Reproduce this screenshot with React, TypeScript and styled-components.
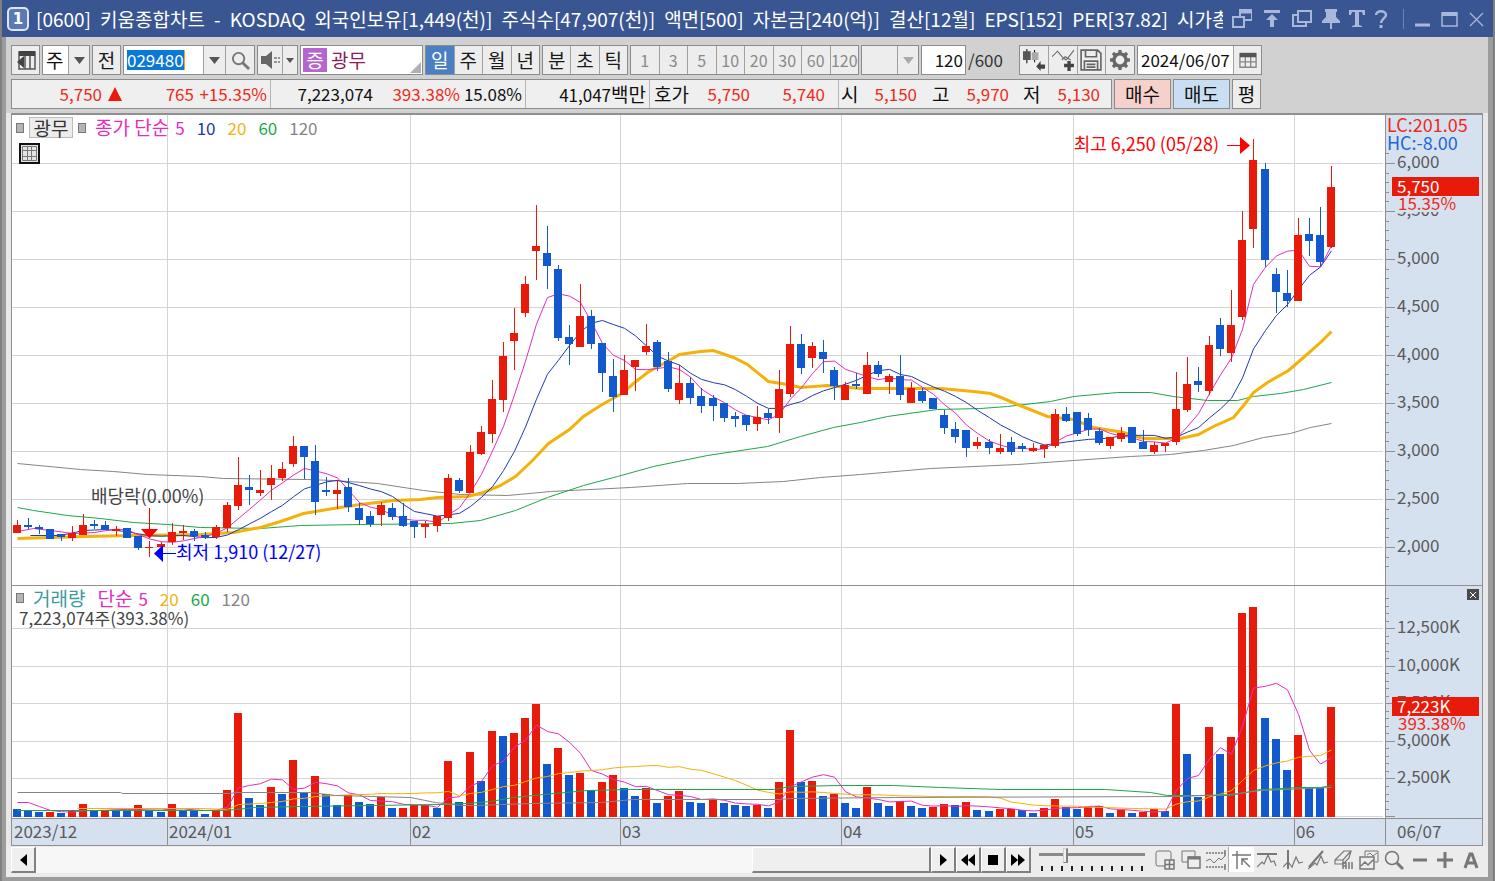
import React from 'react';
import styled, { createGlobalStyle, css } from 'styled-components';

const RED = '#e81a0a';
const BLUE = '#1159cc';
const MAGENTA = '#e62cc0';
const NAVY = '#2039b4';
const ORANGE = '#f2b20a';
const GREEN = '#1ba84a';
const GRAY = '#858585';
const LINE = '#8c8c8c';
const FONT = "'Noto Sans CJK KR', sans-serif";

const Global = createGlobalStyle`
  * { box-sizing: border-box; }
  body { margin: 0; background: #a0a0a0; font-family: ${FONT}; font-size: 17px; line-height: 28px; color: #111; }
  button, input, select { font: inherit; color: inherit; margin: 0; padding: 0; border: 0; border-radius: 0; background: none; }
`;

/* ---------- window frame ---------- */

const Window = styled.main`
  background: #9c9c9c;
  border-left: 2px solid #808080;
  border-right: 2px solid #808080;
  padding-bottom: 4px;
`;

const TitleBar = styled.header`
  display: flex;
  align-items: center;
  height: 37px;
  padding: 0 4px 0 5px;
  background: #3a5692;
  color: #fff;
`;

const ScreenNo = styled.span`
  display: grid;
  place-items: center;
  width: 22px;
  height: 24px;
  margin-right: 7px;
  border: 2px solid #dfe6f3;
  border-radius: 5px;
  background: #5b7ab4;
  font-family: 'DejaVu Sans', sans-serif;
  font-weight: bold;
  font-size: 15px;
  line-height: 20px;
`;

const TitleText = styled.h1`
  display: flex;
  justify-content: space-between;
  flex: 1;
  min-width: 0;
  margin: 0;
  overflow: hidden;
  white-space: nowrap;
  font-size: 19px;
  line-height: 30px;
  font-weight: normal;
`;

const TitleClip = styled.span`
  width: 46px;
  overflow: hidden;
`;

const TitleActions = styled.div`
  display: flex;
  align-items: center;
  margin-left: 4px;
  color: #a9b8d8;
`;

const TitleButton = styled.button<{ $w: number }>`
  display: grid;
  place-items: center;
  width: ${(p) => p.$w}px;
  height: 26px;
  cursor: pointer;
`;

const TitleRule = styled.span`
  width: 1px;
  height: 20px;
  margin: 0 4px 0 10px;
  background: #6c83b3;
`;

const Body = styled.div`
  margin: 0 5px 0 4px;
  background: #e8e8e8;
`;

const Header = styled.div`
  display: flex;
  flex-direction: column;
  gap: 4px;
  padding: 8px 5px 4px;
  background: #d1d1d1;
`;

/* ---------- toolbar ---------- */

const Row = styled.div`
  display: flex;
  gap: 2px;
`;

const Group = styled.div<{ $w?: number }>`
  display: flex;
  flex: none;
  width: ${(p) => (p.$w ? `${p.$w}px` : 'auto')};
  height: 30px;
  border: 1px solid ${LINE};
  background: #ededed;
  & > * + * { border-left: 1px solid #a0a0a0; }
`;

const Tool = styled.button<{ $w?: number; $on?: boolean; $dim?: boolean }>`
  display: grid;
  place-items: center;
  flex: ${(p) => (p.$w ? 'none' : '1 1 0')};
  width: ${(p) => (p.$w ? `${p.$w}px` : 'auto')};
  min-width: 0;
  font-size: ${(p) => (p.$dim ? '16px' : '19px')};
  color: ${(p) => (p.$on ? '#fff' : p.$dim ? '#8a8a8a' : '#1a1a1a')};
  background: ${(p) => (p.$on ? '#4a7fc4' : '#ededed')};
  cursor: pointer;
`;

const Field = styled.input<{ $word?: boolean; $end?: boolean }>`
  flex: 1 1 0;
  min-width: 0;
  padding: 0 2px 0 ${(p) => (p.$end ? '2px' : '3px')};
  background: #fff;
  font-size: ${(p) => (p.$word ? '19px' : '17px')};
  text-align: ${(p) => (p.$end ? 'right' : 'left')};
  outline: none;
`;

const CodeField = styled.div`
  display: flex;
  align-items: center;
  flex: 1 1 0;
  min-width: 0;
  padding: 0 3px;
  background: #fff;
`;

const CodeInput = styled.input`
  width: 58px;
  height: 20px;
  border-right: 1px solid #ff9a2a;
  background: #0a78d7;
  color: #fff;
  line-height: 20px;
  outline: none;
`;

const NameField = styled.div`
  position: relative;
  display: flex;
  align-items: center;
  gap: 4px;
  flex: 1;
  padding-left: 2px;
  background: #fff;
  color: #8a1c5c;
  font-size: 19px;
`;

const Chip = styled.span`
  width: 24px;
  line-height: 24px;
  text-align: center;
  background: #b665cf;
  color: #fff;
`;

const Corner = styled.span`
  position: absolute;
  right: 1px;
  bottom: 1px;
  border-left: 11px solid transparent;
  border-bottom: 11px solid #b0b0b0;
`;

const EmptySelect = styled.select`
  width: 35px;
  appearance: none;
  background: #ededed;
`;

const CountLabel = styled.span`
  width: 49px;
  line-height: 30px;
  color: #333;
`;

/* ---------- quote strip ---------- */

const Quote = styled.dl`
  display: flex;
  width: 1101px;
  height: 30px;
  margin: 0;
  border: 1px solid ${LINE};
  background: #efefef;
  white-space: nowrap;
`;

const Cell = styled.div<{ $w: number }>`
  display: flex;
  justify-content: flex-end;
  width: ${(p) => p.$w}px;
  padding-right: 3px;
  & + & { border-left: 1px solid #b4b4b4; }
`;

const Value = styled.dd<{ $w?: number; $up?: boolean }>`
  width: ${(p) => (p.$w ? `${p.$w}px` : 'auto')};
  margin: 0;
  text-align: right;
  color: ${(p) => (p.$up ? '#ee2a1c' : '#111')};
`;

const Term = styled.dt<{ $w: number }>`
  width: ${(p) => p.$w}px;
  font-size: 19px;
`;

const Unit = styled.span`
  font-size: 19px;
`;

const UpMark = styled.span`
  align-self: center;
  margin-left: 6px;
  border: 7px solid transparent;
  border-top: 0;
  border-bottom: 14px solid ${RED};
`;

const Trade = styled.button<{ $w: number; $tone?: 'buy' | 'sell' }>`
  width: ${(p) => p.$w}px;
  height: 30px;
  border: 1px solid ${LINE};
  background: ${(p) => (p.$tone === 'buy' ? '#f6d0cb' : p.$tone === 'sell' ? '#c9def3' : '#ededed')};
  font-size: 19px;
  cursor: pointer;
`;

/* ---------- chart ---------- */

const ChartBox = styled.section`
  position: relative;
  margin: 0 5px;
`;

const Plot = styled.svg`
  display: block;
  width: 100%;
  height: auto;
  font-family: ${FONT};
  font-size: 17px;
`;

const Legend = styled.div<{ $top: string }>`
  position: absolute;
  left: 5px;
  top: ${(p) => p.$top};
  display: flex;
  align-items: center;
  gap: 5px;
  line-height: 20px;
  white-space: nowrap;
`;

const Dot = styled.span`
  width: 8px;
  height: 10px;
  border: 1px solid #777;
  background: #b5b5b5;
`;

const NameTag = styled.button`
  height: 21px;
  width: 44px;
  border: 1px solid #bbb;
  background: #ececec;
  color: #333;
  font-size: 19px;
  line-height: 19px;
`;

const Periods = styled.div`
  display: flex;
  align-items: baseline;
  gap: 12px;
  margin-left: 4px;
`;

const Period = styled.span<{ $c: string }>`
  color: ${(p) => p.$c};
`;

const Word = styled.span<{ $alone?: boolean }>`
  margin-right: ${(p) => (p.$alone ? '0' : '6px')};
  font-size: 19px;
`;

const Total = styled.p`
  position: absolute;
  left: 8px;
  top: 67.5%;
  margin: 0;
  line-height: 20px;
  color: #444;
`;

const SheetButton = styled.button`
  position: absolute;
  left: 8px;
  top: 30px;
  display: grid;
  place-items: center;
  width: 21px;
  height: 21px;
  border: 2px solid #111;
  background: #e4e4e4;
`;

const PaneClose = styled.button`
  position: absolute;
  right: 4px;
  top: 65%;
  display: grid;
  place-items: center;
  width: 12px;
  height: 11px;
  background: #4a4a4a;
  color: #fff;
`;

/* ---------- footer ---------- */

const Footer = styled.footer`
  display: flex;
  align-items: flex-start;
  height: 31px;
  padding: 1px 5px 0;
  background: #ececec;
`;

const bevel = css`
  border: 1px solid #fff;
  border-right: 2px solid #808080;
  border-bottom: 2px solid #808080;
  background: #efefef;
`;

const Step = styled.button`
  ${bevel}
  display: grid;
  place-items: center;
  flex: none;
  width: 25px;
  height: 26px;
  cursor: pointer;
`;

const ScrollTrack = styled.div`
  display: flex;
  flex: 1;
  height: 26px;
  background: #f7f7f7;
`;

const ScrollThumb = styled.div`
  ${bevel}
  width: 20%;
  margin-left: 80%;
`;

const Zoom = styled.label`
  display: flex;
  flex-direction: column;
  width: 106px;
  margin: 0 7px 0 8px;
`;

const Slider = styled.input`
  appearance: none;
  width: 100%;
  height: 16px;
  background: linear-gradient(#8a8a8a, #8a8a8a) 0 6px / 100% 3px no-repeat;
  &::-webkit-slider-thumb {
    appearance: none;
    width: 5px;
    height: 15px;
    border: 1px solid #d0d0d0;
    border-right: 2px solid #808080;
    border-bottom: 1px solid #808080;
    background: #efefef;
  }
`;

const Marks = styled.span`
  display: flex;
  justify-content: space-between;
  margin-top: 3px;
  padding: 0 2px;
`;

const Mark = styled.i`
  width: 2px;
  height: 5px;
  background: #222;
`;

const FootTools = styled.div`
  display: flex;
  width: 331px;
  color: #777;
`;

const FootTool = styled.button<{ $on?: boolean }>`
  display: grid;
  place-items: center;
  flex: 1;
  height: 25px;
  background: ${(p) => (p.$on ? '#fff' : 'transparent')};
  border-left: 1px solid ${(p) => (p.$on ? '#aaa' : 'transparent')};
  cursor: pointer;
`;

/* ---------- data, in the chart's own units ---------- */

const X0 = 17;
const PITCH = 11.04;
const xAt = (i: number) => Math.round(X0 + i * PITCH);

// up/down, high, body top, body bottom, low
type Candle = [0 | 1, number, number, number, number];
const candles: Candle[] = [
  [1,520,525,533,533],[0,518,525,527,529],[0,525,527,529,534],[0,529,529,539,539],[0,534,534,537,541],
  [1,526,533,538,541],[1,514,525,535,535],[0,520,524,526,529],[0,521,525,530,530],[1,526,529,531,536],
  [0,528,528,538,538],[0,536,536,548,550],[1,541,547,548,557],[1,542,544,547,549],[1,523,532,542,545],
  [1,525,531,533,540],[0,529,531,536,541],[0,532,535,537,539],[1,525,527,537,539],[1,502,505,528,532],
  [1,457,485,506,510],[0,475,487,490,505],[1,470,490,493,496],[1,465,478,485,500],[1,462,469,478,481],
  [1,436,446,464,467],[0,446,446,457,479],[0,445,461,502,515],[0,477,490,492,496],[1,480,490,494,509],
  [0,478,487,507,512],[0,503,508,520,525],[0,511,516,524,527],[1,502,505,515,526],[0,503,508,517,520],
  [0,503,516,526,527],[0,521,521,527,538],[1,521,524,527,538],[1,516,516,526,532],[1,474,478,518,521],
  [0,478,480,491,493],[1,445,452,493,493],[1,426,432,454,455],[1,380,399,434,443],[1,342,356,400,412],
  [1,308,333,341,370],[1,276,284,313,317],[1,205,246,251,280],[0,226,253,266,289],[0,265,269,338,341],
  [0,325,337,344,365],[1,284,316,347,347],[0,310,316,344,349],[0,343,343,373,392],[0,359,376,397,412],
  [1,355,370,395,395],[1,360,360,367,391],[1,324,346,352,355],[0,340,342,367,371],[0,352,361,389,392],
  [1,365,383,400,404],[0,377,383,398,404],[0,388,396,406,413],[0,395,398,406,421],[0,403,403,418,422],
  [0,412,416,419,427],[0,415,415,425,431],[1,406,417,424,431],[0,409,413,418,424],[1,370,389,418,433],
  [1,326,344,394,397],[0,334,344,368,374],[1,342,346,358,368],[0,340,352,359,373],[0,367,370,386,400],
  [1,382,385,400,400],[0,373,384,386,389],[1,352,365,394,394],[0,361,365,374,377],[1,374,376,382,394],
  [0,355,376,395,400],[1,382,388,403,403],[0,388,391,401,403],[0,398,398,409,409],[0,410,415,428,434],
  [0,422,429,437,443],[0,430,430,448,457],[1,437,442,446,449],[0,439,442,448,454],[1,434,448,452,454],
  [0,437,442,452,455],[0,443,446,449,452],[1,443,448,451,452],[1,445,445,449,458],[1,409,414,446,448],
  [0,407,414,421,422],[0,412,412,434,436],[0,413,418,430,436],[0,428,431,443,445],[1,437,437,446,449],
  [1,427,433,439,442],[0,427,427,443,443],[0,430,442,449,449],[1,442,445,452,454],[1,443,443,446,452],
  [1,372,409,442,445],[1,357,384,410,412],[0,367,381,385,392],[1,336,345,391,395],[0,318,325,349,356],
  [1,290,325,353,362],[1,211,240,317,320],[1,139,160,229,248],[0,163,169,260,267],[0,268,274,292,313],
  [0,270,293,301,307],[1,218,235,301,301],[0,218,234,241,256],[0,207,235,262,267],[1,166,187,247,248],
];

const volumes: [0 | 1, number][] = [
  [0,809],[0,810],[0,812],[1,812],[0,813],[1,811],[1,804],[0,810],[1,811],[0,810],[0,810],[1,805],
  [0,811],[0,812],[1,804],[0,810],[0,810],[0,814],[1,810],[1,790],[1,713],[0,798],[0,805],[1,787],
  [0,794],[1,760],[0,792],[1,776],[0,794],[0,805],[1,795],[0,802],[0,804],[1,797],[0,808],[1,808],
  [1,805],[1,805],[0,808],[1,761],[0,802],[1,752],[0,781],[1,731],[0,736],[1,733],[1,718],[1,704],
  [0,764],[1,748],[0,775],[1,773],[0,790],[1,782],[1,775],[0,788],[0,796],[1,788],[0,803],[1,796],
  [1,791],[0,802],[0,803],[1,800],[0,803],[0,805],[0,806],[1,805],[0,808],[1,782],[1,730],[0,782],
  [1,781],[0,796],[1,794],[0,803],[0,808],[1,787],[0,803],[0,806],[1,801],[0,806],[0,808],[1,807],
  [1,804],[0,805],[1,802],[0,810],[0,811],[1,809],[1,809],[0,810],[0,813],[1,808],[1,799],[0,807],
  [0,809],[1,807],[1,806],[0,813],[1,810],[0,813],[1,812],[1,809],[0,811],[1,704],[0,754],[0,797],
  [1,727],[0,754],[1,737],[1,613],[1,607],[0,718],[0,739],[0,770],[1,735],[0,787],[0,787],[1,707],
];

const average = (values: number[], span: number, lead: [number, number][]) => {
  const pts = lead.map(([x, y]) => `${x},${y}`);
  for (let i = span - 1; i < values.length; i++) {
    const sum = values.slice(i - span + 1, i + 1).reduce((a, b) => a + b, 0);
    pts.push(`${xAt(i)},${(sum / span).toFixed(1)}`);
  }
  return pts.join(' ');
};

const closes = candles.map(([up, , top, bottom]) => (up ? top : bottom));
const volTops = volumes.map(([, y]) => y);

const priceLines = [
  { c: GRAY, w: 1, p: '17,463 80,469 113,471 147,474 200,476 223,478 307,479 333,480 377,483 423,490 460,494 507,495 550,491 630,487 687,483 737,483 783,481 820,477 860,474 930,468 1017,464 1073,460 1130,456 1170,454 1203,450 1233,445 1263,437 1290,433 1310,427 1331,423' },
  { c: GREEN, w: 1, p: '17,507 33,510 67,515 100,518 133,522 167,524 200,527 260,528 300,525 360,524 450,523 480,520 515,510 547,497 583,485 617,476 653,466 707,455 767,446 800,436 833,427 860,422 887,416 937,409 980,408 1007,406 1050,401 1073,396 1117,392 1150,392 1173,396 1207,400 1237,400 1253,396 1280,393 1303,389 1331,382' },
  { c: ORANGE, w: 3, p: '17,538 83,536 133,535 200,534 233,532 260,527 280,521 303,513 333,508 360,504 393,500 420,499 437,497 467,496 483,492 500,485 515,476 533,459 548,443 569,429 583,416 600,405 623,392 633,383 647,372 667,361 679,354 700,351 713,350 733,357 747,364 768,381 787,384 800,387 827,385 860,388 940,388 973,391 990,393 1003,398 1017,404 1047,416 1073,419 1093,427 1123,432 1143,438 1180,438 1198,434 1213,426 1233,417 1243,405 1253,392 1267,382 1288,370 1303,357 1320,342 1331,331' },
  { c: NAVY, w: 1, p: average(closes, 10, [[30, 535], [60, 535], [83, 530], [105, 529]]) },
  { c: MAGENTA, w: 1, p: average(closes, 5, [[17, 531], [33, 528], [50, 530]]) },
];

const volumeLines = [
  { c: MAGENTA, p: average(volTops, 5, [[17, 802], [28, 802], [39, 806], [50, 810]]) },
  { c: ORANGE, p: average(volTops, 20, [[77, 808], [200, 808]]) },
  { c: GREEN, p: '17,810 225,810 255,807 300,806 370,805 440,804 467,803 490,801 513,797 543,794 587,790 630,789 773,789 790,786 840,785 893,785 940,787 1000,789 1105,789 1150,792 1167,795 1230,795 1260,789 1300,787 1320,787 1331,785' },
  { c: GRAY, p: '17,792 120,792 122,793 230,793 235,792 310,792 335,795 410,797 435,802 460,805 475,805 530,803 600,802 633,799 780,799 790,798 895,797 1180,796 1200,795 1230,794 1260,790 1331,787' },
];

const months: [number, string][] = [[167, '2024/01'], [410, '02'], [620, '03'], [841, '04'], [1073, '05'], [1294, '06']];
const priceGrid = [6000, 5500, 5000, 4500, 4000, 3500, 3000, 2500, 2000].map((v, i) => ({ v, y: 163 + i * 48 }));
const volumeGrid = [12500, 10000, 7500, 5000, 2500, 0].map((v, i) => ({ v, y: Math.round(628 + i * 37.6) }));
const priceMinor = Array.from({ length: 44 }, (_, i) => Math.round(153.4 + i * 9.6));
const volumeMinor = Array.from({ length: 29 }, (_, i) => Math.round(598 + i * 7.52));

const Chart = () => (
  <Plot id="chart" viewBox="11 113 1472 733" role="img" aria-label="광무 일봉 차트와 거래량">
    <rect x="11" y="113" width="1472" height="733" fill="#fff" />
    <rect x="1385" y="113" width="98" height="733" fill="#d6e1ef" />
    <rect x="11" y="819" width="1472" height="27" fill="#d6e1ef" />
    <g shapeRendering="crispEdges">
      <g fill="#d4d4d4">
        {priceGrid.map((g) => <rect key={g.v} x="12" y={g.y} width="1371" height="1" />)}
        {volumeGrid.map((g) => <rect key={g.v} x="12" y={g.y} width="1371" height="1" />)}
        {months.map(([x]) => <rect key={x} x={x} y="114" width="1" height="704" />)}
      </g>
      <g fill="#909090">
        {months.map(([x]) => <rect key={x} x={x} y="819" width="1" height="27" />)}
        {priceGrid.map((g) => <rect key={g.v} x="1386" y={g.y} width="9" height="1" />)}
        {volumeGrid.map((g) => <rect key={g.v} x="1386" y={g.y} width="9" height="1" />)}
        {priceMinor.map((y) => <rect key={y} x="1386" y={y} width="3" height="1" />)}
        {volumeMinor.map((y) => <rect key={y} x="1386" y={y} width="3" height="1" />)}
        <rect x="11" y="113" width="1472" height="2" />
        <rect x="11" y="845" width="1472" height="1" />
        <rect x="11" y="585" width="1472" height="1" />
        <rect x="11" y="818" width="1472" height="1" />
        <rect x="11" y="113" width="1" height="733" />
        <rect x="1482" y="113" width="1" height="733" />
        <rect x="1385" y="113" width="1" height="733" />
      </g>
      <g fill="none" transform="translate(0.5 0.5)" shapeRendering="auto">
        {priceLines.map((l) => <polyline key={l.c} points={l.p} stroke={l.c} strokeWidth={l.w} />)}
      </g>
      {candles.map(([up, high, top, bottom, low], i) => (
        <g key={i} fill={up ? RED : BLUE}>
          <rect x={xAt(i)} y={high} width="1" height={low - high} />
          <rect x={xAt(i) - 4} y={top} width="8" height={bottom - top} />
        </g>
      ))}
      {volumes.map(([up, y], i) => (
        <rect key={i} x={xAt(i) - 4} y={y} width="8" height={817 - y} fill={up ? RED : BLUE} />
      ))}
      <g fill="none" transform="translate(0.5 0.5)" shapeRendering="auto">
        {volumeLines.map((l) => <polyline key={l.c} points={l.p} stroke={l.c} />)}
      </g>
    </g>

    <g fill="#f00">
      <text x="1219" y="151" textAnchor="end" fontSize="18">최고 6,250 (05/28)</text>
      <path d="M1227 145h13v-8l10 8.500-10 8.500v-8h-13z" />
      <path d="M149 508h1v21h8l-8.500 9.500-8.500-9.500h8z" />
    </g>
    <g fill="#00f">
      <text x="176" y="559" fontSize="18">최저 1,910 (12/27)</text>
      <path d="M176 553h-13v-8l-9 8.500 9 8.500v-8h13z" />
    </g>
    <text x="91" y="503" fill="#444" fontSize="18">배당락(0.00%)</text>

    <g fill="#5a5a5a">
      {priceGrid.map((g) => <text key={g.v} x="1397" y={g.y + 5}>{g.v.toLocaleString('en-US')}</text>)}
      {volumeGrid.filter((g) => g.v > 0).map((g) => (
        <text key={g.v} x="1397" y={g.y + 5}>{g.v.toLocaleString('en-US')}K</text>
      ))}
      <text x="14" y="838">2023/12</text>
      {months.map(([x, label]) => <text key={x} x={x + 2} y="838">{label}</text>)}
      <text x="1397" y="838">06/07</text>
    </g>

    <rect x="1396" y="197" width="80" height="15" fill="#d6e1ef" />
    <rect x="1396" y="717" width="80" height="17" fill="#d6e1ef" />
    <rect x="1392" y="177" width="87" height="19" fill={RED} />
    <rect x="1392" y="697" width="87" height="19" fill={RED} />
    <g fill="#fff">
      <text x="1397" y="193">5,750</text>
      <text x="1397" y="713">7,223K</text>
    </g>
    <g fill="#ee2a1c">
      <text x="1387" y="132" fontSize="18">LC:201.05</text>
      <text x="1398" y="210">15.35%</text>
      <text x="1398" y="730">393.38%</text>
    </g>
    <text x="1387" y="150" fill="#1f66d6" fontSize="18">HC:-8.00</text>
  </Plot>
);

/* ---------- icons ---------- */

const Caret = ({ c = '#555', s = 11 }: { c?: string; s?: number }) => (
  <svg width={s} height="7" viewBox="0 0 11 7" aria-hidden="true"><path d="M0 0h11L5.500 7z" fill={c} /></svg>
);

const Icon = ({ s = 20, children }: { s?: number; children: React.ReactNode }) => (
  <svg width={s} height={s} viewBox="0 0 20 20" fill="none" stroke="currentColor" strokeWidth="1.5" aria-hidden="true">
    {children}
  </svg>
);

const titleTools: { label: string; w: number; icon: React.ReactNode }[] = [
  { label: '화면 분리', w: 30, icon: <Icon><path d="M8 8V1h12v10h-8M1 8h11v10H1z" strokeWidth="2" /><path d="M8 3h11" strokeWidth="3" /></Icon> },
  { label: '맨 위로', w: 30, icon: <Icon><path d="M2 2.500h16" strokeWidth="3" /><path d="M10 5l6 6h-4v7H8v-7H4z" fill="currentColor" stroke="none" /></Icon> },
  { label: '창 복제', w: 30, icon: <Icon><path d="M6 2h13v11H6zM6 6H1v11h13v-4" strokeWidth="2" /></Icon> },
  { label: '고정', w: 27, icon: <Icon><path d="M4 0h12v3h-1v5l4 4v2H1v-2l4-4V3H4zM9 14h2v6H9z" fill="currentColor" stroke="none" /></Icon> },
  { label: '글꼴', w: 25, icon: <Icon><path d="M2 1h16v5h-2l-1-3h-3v13l3 1v1H5v-1l3-1V3H5L4 6H2z" fill="currentColor" stroke="none" /></Icon> },
  { label: '도움말', w: 24, icon: <Icon><path d="M5 6c0-5 10-5 10 0 0 3-5 4-5 8" strokeWidth="2.500" /><path d="M8.500 16h3v3h-3z" fill="currentColor" stroke="none" /></Icon> },
];

const windowTools = [
  { label: '최소화', icon: <Icon><path d="M3 16h15" strokeWidth="3" /></Icon> },
  { label: '최대화', icon: <Icon><path d="M3 4h15v13H3z" /><path d="M3 5h15" strokeWidth="4" /></Icon> },
  { label: '닫기', icon: <Icon><path d="M4 4l13 13M17 4L4 17" strokeWidth="1.300" /></Icon> },
];

const Wave = ({ d }: { d: string }) => <path d={d} strokeWidth="1.200" />;

const footTools: { label: string; on?: boolean; icon: React.ReactNode }[] = [
  { label: '차트 추가', icon: <Icon><rect x="1" y="1" width="15" height="15" rx="2" strokeWidth="1" /><path d="M10 10h9v9h-9zM14.500 10v9M10 14.500h9" fill="#eee" /></Icon> },
  { label: '차트 겹침', icon: <Icon><path d="M1 1h13v11H1z" strokeWidth="1" /><path d="M7 7h12v11H7z" fill="#eee" /><path d="M7 8h12" strokeWidth="3" /></Icon> },
  { label: '구간', icon: <Icon><path d="M0 3h19M0 17h19" strokeDasharray="2 1" /><path d="M19 0v6M19 14v6" /><path d="M0 11l4-2 4 4 5-5 2 2 4-4" strokeWidth="1" /></Icon> },
  { label: '십자선', on: true, icon: <Icon><path d="M0 5h19M5 1v18M18 17l-8-8M10 15V9h6" /></Icon> },
  { label: '수평선', icon: <Icon><path d="M0 4h20" strokeWidth="2" /><Wave d="M0 17l5-5 2 2 4-9 3 7 3-1 2 5" /></Icon> },
  { label: '수직선', icon: <Icon><path d="M5 0v19" strokeWidth="2" /><Wave d="M0 17l5-5 4 5 4-10 3 6 4-1" /></Icon> },
  { label: '추세선', icon: <Icon><path d="M1 17L15 1" strokeWidth="2" /><Wave d="M0 19l7-6 2 2 4-9 3 7 4-1" /></Icon> },
  { label: '모두 지우기', icon: <Icon><path d="M1 10l9-9h7l-2 7-6 6H1zM1 10h8l8-9M9 10v4" strokeWidth="1.200" /><path d="M9 19v-6h3v6M9 16h3M15 12v7M18 12v7" /></Icon> },
  { label: '그림 저장', icon: <Icon><path d="M6 1h13v11h-3M6 1v5M8 5l3-2 3 3 4-3" strokeWidth="1" /><path d="M1 7h14v12H1zM2 16l4-4 3 3 5-5" /></Icon> },
  { label: '확대경', icon: <Icon><circle cx="8" cy="8" r="6.500" /><path d="M13 13l6 6" strokeWidth="3" /></Icon> },
  { label: '축소', icon: <Icon><path d="M3 10h14" strokeWidth="3" /></Icon> },
  { label: '확대', icon: <Icon><path d="M2 10h16M10 2v16" strokeWidth="3" /></Icon> },
  { label: '자동 맞춤', icon: <Icon><path d="M4 18L9 4h2l5 14M6 13h8" strokeWidth="3" /></Icon> },
];

const chartTools: { label: string; icon: React.ReactNode }[] = [
  { label: '종목 추가', icon: <Icon s={22}><path d="M3.500 0v13M10.500 1v11" strokeWidth="1" /><path d="M0 2h7v8H0z" fill="#555" stroke="none" /><path d="M8 3h6v7H8z" fill="#aaa" stroke="none" /><path d="M12 16l4-5v3h4v4h-4v2z" fill="#444" stroke="none" /></Icon> },
  { label: '지표 추가', icon: <Icon s={22}><path d="M0 7l5-5 5 6 3 2 7-9M9 10l3-3 5 3" strokeWidth="1" stroke="#666" /><path d="M11 15h9M15.500 11v9" strokeWidth="3" stroke="#444" /></Icon> },
  { label: '저장', icon: <Icon s={22}><path d="M1 1h15l3 3v15H1zM5 1v6h10V1M4 19v-8h12v8M6 14h8M6 16.500h8" stroke="#666" /></Icon> },
  { label: '설정', icon: <Icon s={22}><circle cx="10" cy="10" r="5.500" strokeWidth="3" stroke="#666" /><path d="M10 1v4M10 15v4M1 10h4M15 10h4M3.600 3.600l3 3M13.400 13.400l3 3M16.400 3.600l-3 3M6.600 13.400l-3 3" strokeWidth="3" stroke="#666" /></Icon> },
];

/* ---------- page ---------- */

const App = () => (
  <>
    <Global />
    <Window>
      <TitleBar>
        <ScreenNo>1</ScreenNo>
        <TitleText>
          <span>[0600]</span>
          <span>키움종합차트</span>
          <span>-</span>
          <span>KOSDAQ</span>
          <span>외국인보유[1,449(천)]</span>
          <span>주식수[47,907(천)]</span>
          <span>액면[500]</span>
          <span>자본금[240(억)]</span>
          <span>결산[12월]</span>
          <span>EPS[152]</span>
          <span>PER[37.82]</span>
          <TitleClip>시가총</TitleClip>
        </TitleText>
        <TitleActions>
          {titleTools.map((t) => <TitleButton key={t.label} $w={t.w} aria-label={t.label}>{t.icon}</TitleButton>)}
          <TitleRule />
          {windowTools.map((t) => <TitleButton key={t.label} $w={27} aria-label={t.label}>{t.icon}</TitleButton>)}
        </TitleActions>
      </TitleBar>

      <Body>
        <Header>
          <Row>
            <Group $w={29}>
              <Tool aria-label="패널 접기">
                <Icon s={20}>
                  <path d="M3 2h16v17H3zM9 6v13M14 6v13" stroke="#555" />
                  <path d="M3 1h16v5H3zM1 12l7-6v12z" fill="#444" stroke="none" />
                </Icon>
              </Tool>
            </Group>
            <Group $w={48}>
              <Field aria-label="종류" defaultValue="주" $word />
              <Tool $w={21} aria-label="종류 선택"><Caret /></Tool>
            </Group>
            <Group $w={29}><Tool>전</Tool></Group>
            <Group $w={132}>
              <CodeField><CodeInput aria-label="종목코드" defaultValue="029480" /></CodeField>
              <Tool $w={22} aria-label="종목 목록"><Caret /></Tool>
              <Tool $w={29} aria-label="종목 검색">
                <Icon s={19}><circle cx="8" cy="8" r="6" stroke="#777" strokeWidth="2" /><path d="M12 12l7 7" stroke="#777" strokeWidth="3" /></Icon>
              </Tool>
            </Group>
            <Group $w={41}>
              <Tool aria-label="음성">
                <Icon s={20}><path d="M1 6h5l6-5v18l-6-5H1z" fill="#666" stroke="none" /><path d="M14 8h3M14 12h3M18 8h2M18 12h2" stroke="#777" /></Icon>
              </Tool>
              <Tool $w={15} aria-label="음성 선택"><Caret s={8} /></Tool>
            </Group>
            <Group $w={123}>
              <NameField><Chip>증</Chip>광무<Corner /></NameField>
            </Group>
            <Group $w={115}>
              {['일', '주', '월', '년'].map((t, i) => <Tool key={t} $on={i === 0}>{t}</Tool>)}
            </Group>
            <Group $w={86}>
              {['분', '초', '틱'].map((t) => <Tool key={t}>{t}</Tool>)}
            </Group>
            <Group $w={229}>
              {['1', '3', '5', '10', '20', '30', '60', '120'].map((t) => <Tool key={t} $dim>{t}</Tool>)}
            </Group>
            <Group $w={58}>
              <EmptySelect aria-label="주기" disabled />
              <Tool aria-label="주기 선택" $dim><Caret c="#aaa" /></Tool>
            </Group>
            <Group $w={45}><Field aria-label="표시 개수" defaultValue="120" $end /></Group>
            <CountLabel>/600</CountLabel>
            <Group $w={116}>
              {chartTools.map((t) => <Tool key={t.label} aria-label={t.label}>{t.icon}</Tool>)}
            </Group>
            <Group $w={125}>
              <Field aria-label="기준일" defaultValue="2024/06/07" />
              <Tool $w={28} aria-label="달력">
                <Icon s={18}><path d="M1 3h18v15H1zM7 7v11M13 7v11M1 12h18" stroke="#888" /><path d="M1 2h18v5H1z" fill="#555" stroke="none" /></Icon>
              </Tool>
            </Group>
          </Row>

          <Row>
            <Quote>
              <Cell $w={258}>
                <Value $up>5,750</Value>
                <UpMark />
                <Value $w={72} $up>765</Value>
                <Value $w={73} $up>+15.35%</Value>
              </Cell>
              <Cell $w={255}>
                <Value>7,223,074</Value>
                <Value $w={87} $up>393.38%</Value>
                <Value $w={62}>15.08%</Value>
              </Cell>
              <Cell $w={124}><Value>41,047<Unit>백만</Unit></Value></Cell>
              <Cell $w={189}>
                <Term $w={35}>호가</Term>
                <Value $w={61} $up>5,750</Value>
                <Value $w={75} $up>5,740</Value>
                <Value $w={10} />
              </Cell>
              <Cell $w={273}>
                <Term $w={18}>시</Term>
                <Value $w={58} $up>5,150</Value>
                <Value $w={15} />
                <Term $w={18}>고</Term>
                <Value $w={59} $up>5,970</Value>
                <Value $w={14} />
                <Term $w={18}>저</Term>
                <Value $w={59} $up>5,130</Value>
                <Value $w={8} />
              </Cell>
            </Quote>
            <Trade $w={57} $tone="buy">매수</Trade>
            <Trade $w={57} $tone="sell">매도</Trade>
            <Trade $w={29}>평</Trade>
          </Row>
        </Header>

        <ChartBox>
          <Chart />
          <Legend $top="4px">
            <Dot />
            <NameTag>광무</NameTag>
            <Dot />
            <Periods>
              <Period $c={MAGENTA}><Word>종가 단순</Word>5</Period>
              <Period $c={NAVY}>10</Period>
              <Period $c={ORANGE}>20</Period>
              <Period $c={GREEN}>60</Period>
              <Period $c={GRAY}>120</Period>
            </Periods>
          </Legend>
          <SheetButton aria-label="데이터 표">
            <svg width="15" height="15" viewBox="0 0 15 15" fill="none" stroke="#777" aria-hidden="true">
              <path d="M.5.500h14v14H.5zM5.500 0v15M9.500 0v15M0 4.500h15M0 10.500h15" />
            </svg>
          </SheetButton>
          <Legend $top="64.8%">
            <Dot />
            <Periods>
              <Period $c="#3a9aa0"><Word $alone>거래량</Word></Period>
              <Period $c={MAGENTA}><Word>단순</Word>5</Period>
              <Period $c={ORANGE}>20</Period>
              <Period $c={GREEN}>60</Period>
              <Period $c={GRAY}>120</Period>
            </Periods>
          </Legend>
          <Total>7,223,074주(393.38%)</Total>
          <PaneClose aria-label="거래량 닫기">
            <svg width="8" height="6" viewBox="0 0 8 6" stroke="#fff" aria-hidden="true"><path d="M1 0l6 6M7 0L1 6" /></svg>
          </PaneClose>
        </ChartBox>

        <Footer>
          <Step aria-label="이전"><svg width="7" height="12" viewBox="0 0 7 12"><path d="M7 0v12L0 6z" /></svg></Step>
          <ScrollTrack role="scrollbar" aria-label="기간 이동" aria-controls="chart" aria-valuenow={100}><ScrollThumb /></ScrollTrack>
          <Step aria-label="다음"><svg width="7" height="12" viewBox="0 0 7 12"><path d="M0 0v12l7-6z" /></svg></Step>
          <Step aria-label="되감기"><svg width="14" height="12" viewBox="0 0 14 12"><path d="M7 0v12L0 6zM14 0v12L7 6z" /></svg></Step>
          <Step aria-label="정지"><svg width="10" height="10" viewBox="0 0 10 10"><path d="M0 0h10v10H0z" /></svg></Step>
          <Step aria-label="빨리 감기"><svg width="14" height="12" viewBox="0 0 14 12"><path d="M0 0v12l7-6zM7 0v12l7-6z" /></svg></Step>
          <Zoom>
            <Slider type="range" min={0} max={100} defaultValue={24} aria-label="확대 비율" />
            <Marks>{Array.from({ length: 11 }, (_, i) => <Mark key={i} />)}</Marks>
          </Zoom>
          <FootTools>
            {footTools.map((t) => <FootTool key={t.label} $on={t.on} aria-label={t.label}>{t.icon}</FootTool>)}
          </FootTools>
        </Footer>
      </Body>
    </Window>
  </>
);

export default App;
